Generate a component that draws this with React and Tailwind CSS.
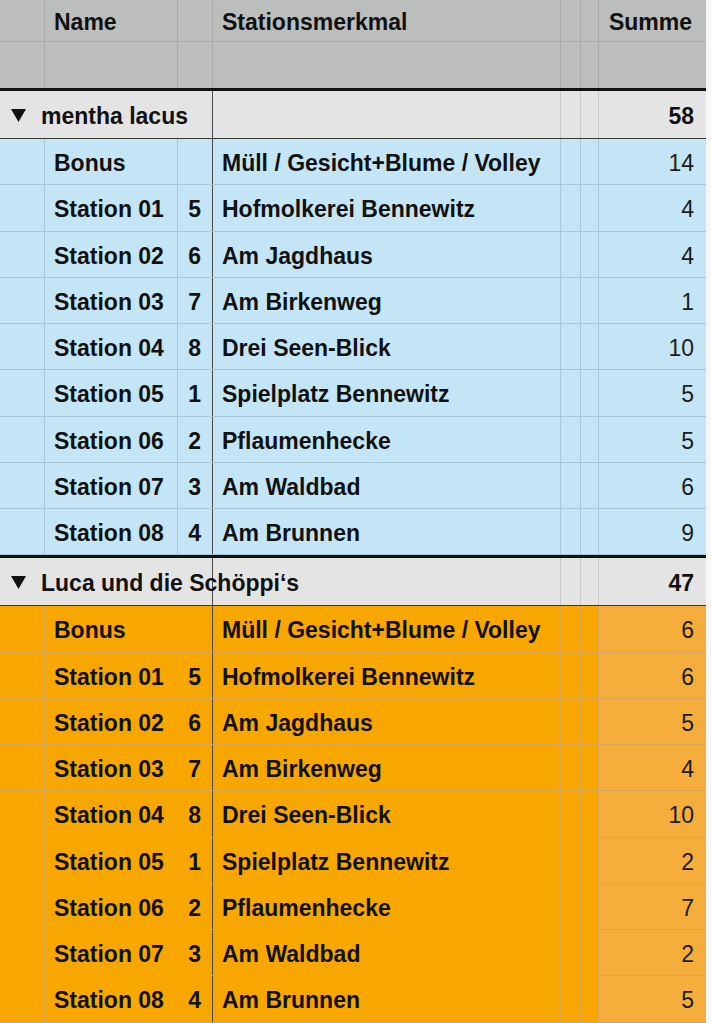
import React from 'react';

const COLS = 'grid grid-cols-[45px_133px_35px_348px_20px_18px_107px]';
const TXT = 'flex items-center pt-[4px]';

const groups = [
  {
    name: 'mentha lacus',
    total: 58,
    theme: 'blue',
    rows: [
      ['Bonus', '', 'Müll / Gesicht+Blume / Volley', 14],
      ['Station 01', 5, 'Hofmolkerei Bennewitz', 4],
      ['Station 02', 6, 'Am Jagdhaus', 4],
      ['Station 03', 7, 'Am Birkenweg', 1],
      ['Station 04', 8, 'Drei Seen-Blick', 10],
      ['Station 05', 1, 'Spielplatz Bennewitz', 5],
      ['Station 06', 2, 'Pflaumenhecke', 5],
      ['Station 07', 3, 'Am Waldbad', 6],
      ['Station 08', 4, 'Am Brunnen', 9],
    ],
  },
  {
    name: 'Luca und die Schöppi‘s',
    total: 47,
    theme: 'orange',
    rows: [
      ['Bonus', '', 'Müll / Gesicht+Blume / Volley', 6],
      ['Station 01', 5, 'Hofmolkerei Bennewitz', 6],
      ['Station 02', 6, 'Am Jagdhaus', 5],
      ['Station 03', 7, 'Am Birkenweg', 4],
      ['Station 04', 8, 'Drei Seen-Blick', 10],
      ['Station 05', 1, 'Spielplatz Bennewitz', 2],
      ['Station 06', 2, 'Pflaumenhecke', 7],
      ['Station 07', 3, 'Am Waldbad', 2],
      ['Station 08', 4, 'Am Brunnen', 5],
    ],
  },
];

const themes = {
  blue: {
    bg: 'bg-[#c4e5f5]',
    sum: 'bg-[#c4e5f5]',
    line: 'border-[#a8c7d6]',
  },
  orange: {
    bg: 'bg-[#f7a700]',
    sum: 'bg-[#f5ad3c]',
    line: 'border-[#d9a456]',
  },
};

const Triangle = () => (
  <svg width="15" height="13" viewBox="0 0 15 13" className="shrink-0">
    <polygon points="0,0 15,0 7.5,13" fill="#111" />
  </svg>
);

const StationRow = ({ row, theme }) => {
  const t = themes[theme];
  const [name, num, place, sum] = row;
  return (
    <div className={`${COLS} h-[46.25px] border-b ${t.line} ${t.bg}`}>
      <div className={`border-r ${t.line}`}></div>
      <div className={`border-r ${t.line} ${TXT} pl-[9px] font-bold`}>{name}</div>
      <div className={`border-r border-[#4a4a4a] ${TXT} justify-end pr-[11px] font-bold`}>{num}</div>
      <div className={`border-r ${t.line} ${TXT} pl-[9px] font-bold whitespace-nowrap`}>{place}</div>
      <div className={`border-r ${t.line}`}></div>
      <div className={`border-r ${t.line}`}></div>
      <div className={`${t.sum} ${TXT} justify-end pr-[12px] text-[#1c1c1c]`}>{sum}</div>
    </div>
  );
};

const Group = ({ group }) => (
  <div>
    <div className={`${COLS} h-[51px] bg-[#e4e4e4] border-t-[3px] border-t-[#111] border-b border-b-[#3a3a3a]`}>
      <div className={`col-span-3 border-r border-[#4a4a4a] ${TXT} gap-[15px] pl-[11px] font-bold whitespace-nowrap`}>
        <span className="-mt-[3px]">
          <Triangle />
        </span>
        <span>{group.name}</span>
      </div>
      <div className="border-r border-[#c9c9c9]"></div>
      <div className="border-r border-[#c9c9c9]"></div>
      <div className="border-r border-[#c9c9c9]"></div>
      <div className={`${TXT} justify-end pr-[12px] font-bold`}>{group.total}</div>
    </div>
    {group.rows.map((row) => (
      <StationRow key={row[0]} row={row} theme={group.theme} />
    ))}
  </div>
);

export default function App() {
  return (
    <div
      className="w-[711px] h-[1023px] overflow-hidden bg-[#f6f6f6] text-[#111] text-[23px] leading-none"
      style={{ fontFamily: '"Liberation Sans", Arial, sans-serif' }}
    >
      <div className="w-[706px]">
        {/* Header */}
        <div className={`${COLS} h-[42px] bg-[#bcbdbd] border-b border-[#a9aaaa]`}>
          <div className="border-r border-[#a9aaaa]"></div>
          <div className={`border-r border-[#a9aaaa] ${TXT} pl-[9px] font-bold`}>Name</div>
          <div className="border-r border-[#a9aaaa]"></div>
          <div className={`border-r border-[#a9aaaa] ${TXT} pl-[9px] font-bold`}>Stationsmerkmal</div>
          <div className="border-r border-[#a9aaaa]"></div>
          <div className="border-r border-[#a9aaaa]"></div>
          <div className={`${TXT} justify-end pr-[14px] font-bold`}>Summe</div>
        </div>
        <div className={`${COLS} h-[46px] bg-[#bcbdbd]`}>
          <div className="border-r border-[#a9aaaa]"></div>
          <div className="border-r border-[#a9aaaa]"></div>
          <div className="border-r border-[#a9aaaa]"></div>
          <div className="border-r border-[#a9aaaa]"></div>
          <div className="border-r border-[#a9aaaa]"></div>
          <div className="border-r border-[#a9aaaa]"></div>
          <div></div>
        </div>

        {groups.map((g) => (
          <Group key={g.name} group={g} />
        ))}
      </div>
    </div>
  );
}
